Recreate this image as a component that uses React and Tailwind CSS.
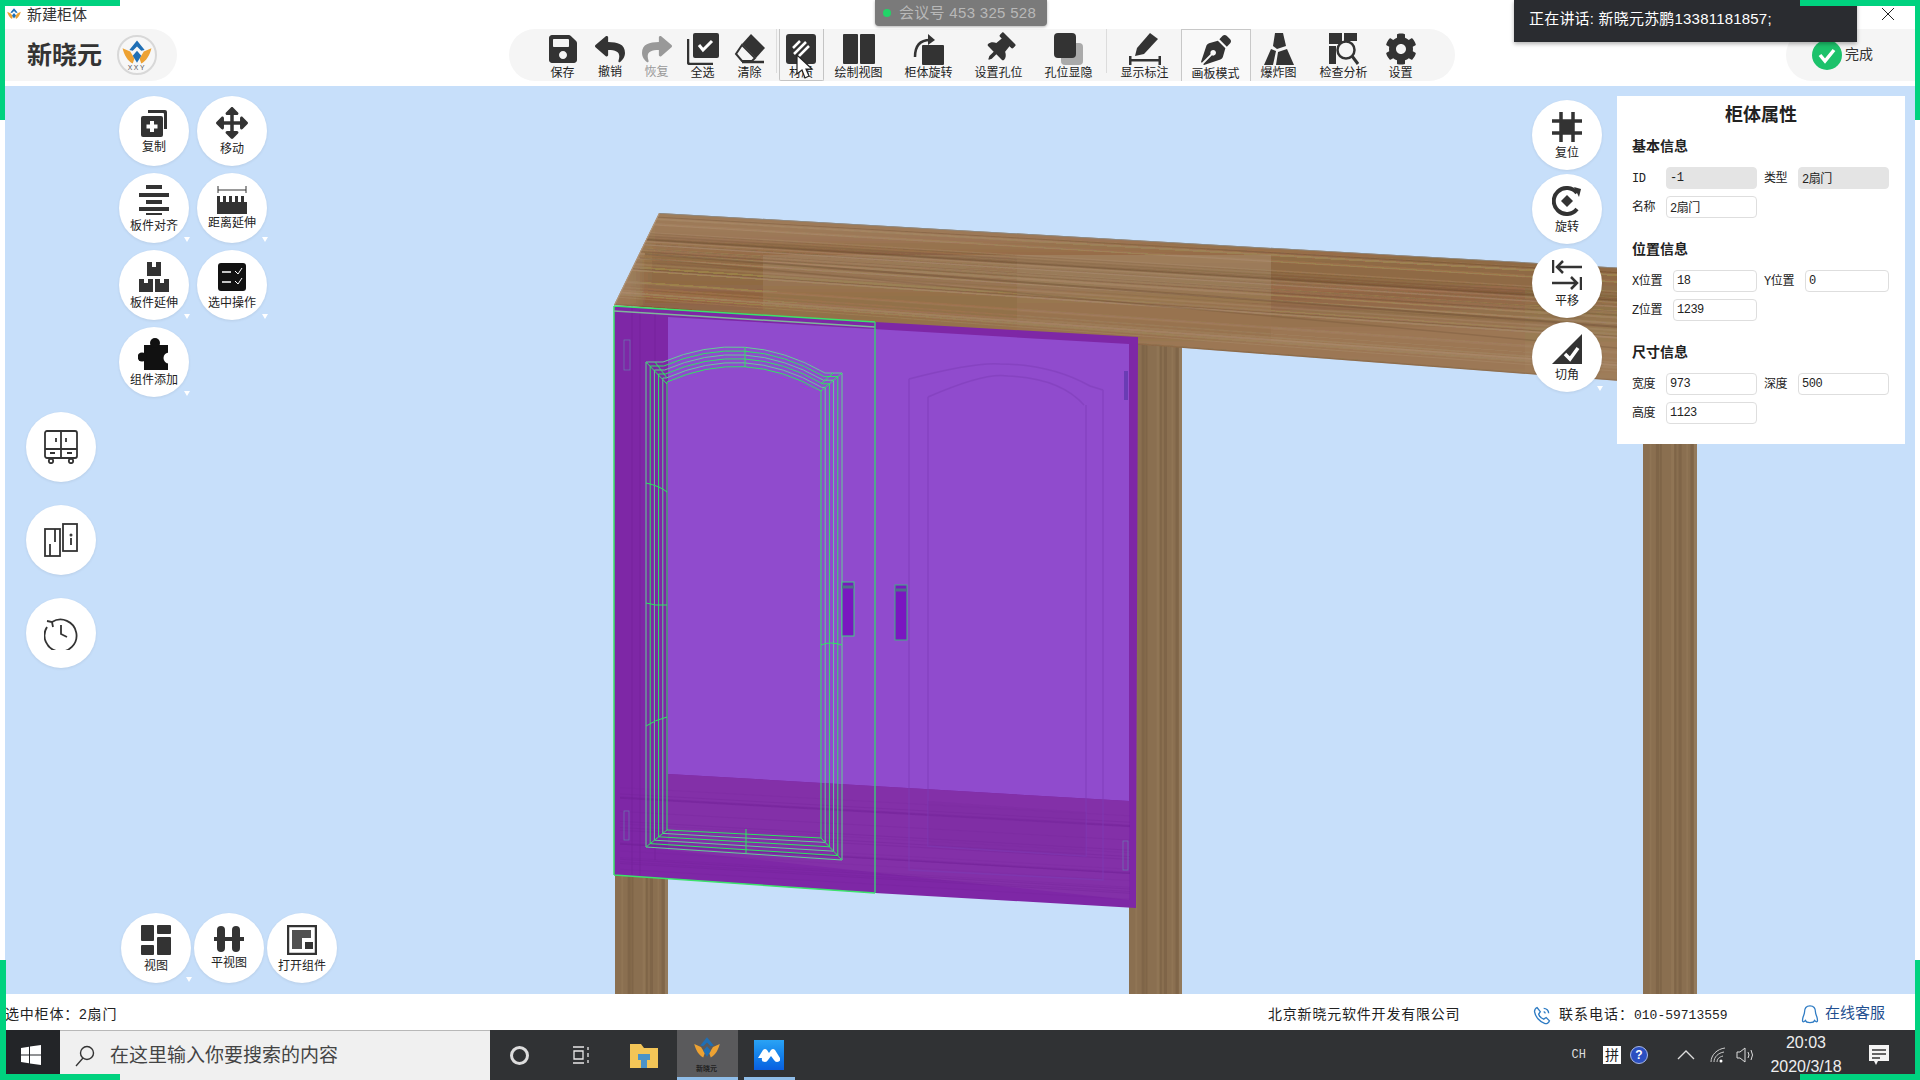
import { FaSave, FaReply, FaShare, FaCog, FaArrowsAlt, FaPenNib, FaThumbtack } from 'react-icons/fa';

// toolbar icons
const CheckAll = () => (
  <svg width="32" height="32" viewBox="0 0 32 32" fill="#333">
    <rect x="6" y="0" width="26" height="25" rx="2" />
    <path d="M12 12l4 5 9-9" stroke="#fff" strokeWidth="3" fill="none" />
    <path d="M1 6v23q0 2 2 2h23" stroke="#333" strokeWidth="2.5" fill="none" />
  </svg>
);
const Eraser = () => (
  <svg width="32" height="32" viewBox="0 0 32 32">
    <path d="M17 1l14 14-9 10-14-14z" fill="#333" />
    <path d="M8 12l13 13-3 3H8L2 21z" fill="none" stroke="#333" strokeWidth="2" />
    <path d="M8 29h22" stroke="#333" strokeWidth="2.500" />
  </svg>
);
const Hatch = () => (
  <svg width="32" height="32" viewBox="0 0 32 32">
    <rect x="1" y="1" width="30" height="30" rx="3" fill="#333" />
    <path d="M8 15L15 8M9 21L21 9M13 24L24 13" stroke="#fff" strokeWidth="2.500" />
  </svg>
);
const Columns = () => (
  <svg width="32" height="32" viewBox="0 0 32 32" fill="#333">
    <rect x="0" y="1" width="15" height="30" rx="1" />
    <rect x="17" y="1" width="15" height="30" rx="1" />
  </svg>
);
const RotateBox = () => (
  <svg width="34" height="32" viewBox="0 0 34 32">
    <rect x="10" y="12" width="22" height="20" rx="1" fill="#333" />
    <path d="M3 24C3 12 9 7 18 7" stroke="#333" strokeWidth="2.5" fill="none" />
    <path d="M16 1l7 6-7 5z" fill="#333" />
  </svg>
);
const Holes = () => (
  <svg width="32" height="32" viewBox="0 0 32 32">
    <rect x="8" y="10" width="22" height="22" rx="4" fill="#aaa" />
    <rect x="1" y="0" width="22" height="25" rx="4" fill="#333" />
  </svg>
);
const Annotate = () => (
  <svg width="34" height="32" viewBox="0 0 34 32" fill="#333">
    <path d="M9 15L22 0l8 6-14 15-9 2z" />
    <rect x="1" y="26" width="32" height="2.5" />
    <rect x="1" y="23" width="2.5" height="9" />
    <rect x="30.5" y="23" width="2.5" height="9" />
  </svg>
);
const Explode = () => (
  <svg width="32" height="32" viewBox="0 0 32 32" fill="#333">
    <path d="M12 0h8l3 13-9 3-4-3z" />
    <path d="M8 16l5 2-3 14H1z" />
    <path d="M15 19l9-3 7 16H13z" />
  </svg>
);
const Inspect = () => (
  <svg width="32" height="32" viewBox="0 0 32 32">
    <rect x="1" y="0" width="13" height="11" fill="#333" />
    <rect x="16" y="0" width="13" height="8" fill="#333" />
    <rect x="1" y="13" width="7" height="18" fill="#333" />
    <circle cx="18" cy="17" r="8.5" fill="#f5f5f5" stroke="#333" strokeWidth="2.5" />
    <path d="M24 23l6 8" stroke="#333" strokeWidth="3" />
  </svg>
);

// canvas button icons
const CopyPlus = () => (
  <svg width="28" height="28" viewBox="0 0 28 28" fill="#333">
    <path d="M8 1h17q2 0 2 2v17h-3V5q0-1-1-1H8z" />
    <rect x="1" y="7" width="22" height="21" rx="2" />
    <path d="M12 12v11M6.500 17.500h11" stroke="#fff" strokeWidth="4" />
  </svg>
);
const AlignLines = () => (
  <svg width="30" height="30" viewBox="0 0 30 30" fill="#333">
    <rect x="7" y="0" width="16" height="4" />
    <rect x="0" y="8" width="30" height="4" />
    <rect x="7" y="15" width="16" height="4" />
    <rect x="0" y="22" width="30" height="4" />
    <rect x="7" y="28" width="16" height="2" />
  </svg>
);
const Ruler = () => (
  <svg width="30" height="28" viewBox="0 0 30 28" fill="#333">
    <path d="M1 0v7M29 0v7M1 4h28" stroke="#333" strokeWidth="1" />
    <path d="M0 10h3v6h3v-6h3v6h3v-6h3v6h3v-6h3v6h3v-6h3v6h3v-6v18H0z" />
  </svg>
);
const Boxes = () => (
  <svg width="30" height="30" viewBox="0 0 30 30" fill="#333">
    <path d="M8 0h5v5h4V0h5v14H8zM0 17h5v4h4v-4h5v13H0zM16 17h5v4h4v-4h5v13H16z" />
  </svg>
);
const Checklist = () => (
  <svg width="28" height="28" viewBox="0 0 28 28">
    <rect x="0" y="0" width="28" height="28" rx="3" fill="#111" />
    <path d="M4 9h9M4 19h9" stroke="#fff" strokeWidth="1.500" />
    <path d="M17 8l3 3 4-6M17 18l3 3 4-6" stroke="#fff" strokeWidth="1" fill="none" />
  </svg>
);
const Puzzle = () => (
  <svg width="32" height="32" viewBox="0 0 32 32" fill="#111">
    <rect x="6" y="7" width="24" height="25" />
    <circle cx="17" cy="5" r="5" />
    <circle cx="4" cy="19" r="4.500" />
    <circle cx="31" cy="20" r="5.500" fill="#fff" />
  </svg>
);
const Hash = () => (
  <svg width="30" height="30" viewBox="0 0 30 30">
    <path d="M9 0v30M21 0v30M0 9h30M0 21h30" stroke="#333" strokeWidth="3.500" />
    <rect x="9" y="9" width="12" height="12" fill="#333" />
  </svg>
);
const RotateC = () => (
  <svg width="30" height="30" viewBox="0 0 30 30">
    <path d="M25 7A13 13 0 1 0 25 23" stroke="#333" strokeWidth="4" fill="none" />
    <path d="M15 9l6 6-6 6-6-6z" fill="#333" />
    <path d="M22 1l7 2-2 8z" fill="#333" />
  </svg>
);
const Shift = () => (
  <svg width="30" height="30" viewBox="0 0 30 30" fill="none" stroke="#333" strokeWidth="2.500">
    <path d="M1 0v13M5 7h25M11 1L5 7l6 6" />
    <path d="M29 17v13M0 23h25M19 17l6 6-6 6" />
  </svg>
);
const Chamfer = () => (
  <svg width="30" height="30" viewBox="0 0 30 30">
    <path d="M30 0v30H0z" fill="#333" />
    <path d="M13 20l5 5 8-11" stroke="#fff" strokeWidth="3.500" fill="none" />
  </svg>
);
const Layout = () => (
  <svg width="30" height="30" viewBox="0 0 30 30" fill="#333">
    <rect x="0" y="0" width="13" height="16" rx="1" />
    <rect x="0" y="20" width="13" height="10" rx="1" />
    <rect x="16" y="0" width="14" height="9" rx="1" />
    <rect x="16" y="12" width="14" height="18" rx="1" />
  </svg>
);
const Dumbbell = () => (
  <svg width="30" height="30" viewBox="0 0 30 30" fill="#333">
    <rect x="3" y="1" width="8" height="26" rx="4" />
    <rect x="18" y="1" width="8" height="26" rx="4" />
    <rect x="0" y="12" width="30" height="4" />
  </svg>
);
const OpenPart = () => (
  <svg width="30" height="30" viewBox="0 0 30 30">
    <rect x="1" y="1" width="28" height="28" fill="none" stroke="#333" strokeWidth="2.500" />
    <path d="M5 5h19v8h-9v11H5z" fill="#333" opacity="0.85" />
    <rect x="18" y="17" width="8" height="7" fill="#333" />
  </svg>
);
const Cabinet = () => (
  <svg width="34" height="34" viewBox="0 0 34 34" fill="none" stroke="#333" strokeWidth="1.800">
    <rect x="1" y="1" width="32" height="27" rx="2" />
    <path d="M1 19h32M17 1v27M12 8v4M22 8v4M6 23h5M23 23h5" />
    <circle cx="7" cy="31" r="2.200" />
    <circle cx="27" cy="31" r="2.200" />
  </svg>
);
const Doors = () => (
  <svg width="34" height="34" viewBox="0 0 34 34" fill="none" stroke="#333" strokeWidth="1.800">
    <rect x="1" y="6" width="15" height="27" />
    <rect x="19" y="1" width="14" height="27" />
    <path d="M11 6v13M6 33V21M27 15v7" />
    <circle cx="27" cy="12" r="0.600" />
  </svg>
);
const History = () => (
  <svg width="34" height="34" viewBox="0 0 34 34" fill="none" stroke="#333" strokeWidth="1.800">
    <path d="M8 6A16 16 0 1 1 3 11" />
    <path d="M3 5l5 1 1 5" />
    <path d="M17 9v9l6 3" />
  </svg>
);

// logo used in the header, the title bar and the taskbar
const Logo = ({ size = 30, text = true }) => (
  <svg width={size} height={size} viewBox="0 0 40 40">
    <path d="M20 3l9 11-4 1-5-5-5 5-4-1z" fill="#1f6fb5" />
    <path d="M3 12l9 4 5 8-2 6C9 27 5 20 3 12zM37 12l-9 4-5 8 2 6c6-3 10-10 12-18z" fill="#eda233" />
    <path d="M20 15l5 6-5 8-5-8z" fill="#1f6fb5" />
    {text && (
      <text x="20" y="38" textAnchor="middle" fontSize="8" fill="#555" letterSpacing="2" fontFamily="Liberation Sans">XXY</text>
    )}
  </svg>
);

const toolItems = [
  { label: '保存', w: 'w-[48px]', icon: <FaSave size={32} color="#333" /> },
  { label: '撤销', w: 'w-[47px]', icon: <FaReply size={30} color="#333" />, up: true },
  { label: '恢复', w: 'w-[46px]', icon: <FaShare size={30} color="#999" />, up: true, muted: true },
  { label: '全选', w: 'w-[46px]', icon: <CheckAll /> },
  { label: '清除', w: 'w-[48px]', icon: <Eraser /> },
  { divider: true },
  { label: '材质', w: 'w-[45px]', icon: <Hatch />, pressed: true },
  { label: '绘制视图', w: 'w-[70px]', icon: <Columns /> },
  { label: '柜体旋转', w: 'w-[70px]', icon: <RotateBox /> },
  { label: '设置孔位', w: 'w-[70px]', icon: <FaThumbtack size={30} color="#333" className="rotate-45" /> },
  { label: '孔位显隐', w: 'w-[70px]', icon: <Holes /> },
  { divider: true },
  { label: '显示标注', w: 'w-[72px]', icon: <Annotate /> },
  { label: '画板模式', w: 'w-[70px]', icon: <FaPenNib size={30} color="#333" />, active: true },
  { label: '爆炸图', w: 'w-[56px]', icon: <Explode /> },
  { label: '检查分析', w: 'w-[74px]', icon: <Inspect /> },
  { label: '设置', w: 'w-[40px]', icon: <FaCog size={32} color="#333" /> },
];

const ToolItem = ({ item }) => {
  if (item.divider) {
    return <div className="w-px h-[44px] bg-[#dcdcdc] mx-[2px] shrink-0" />;
  }
  return (
    <div
      className={`${item.w} h-[52px] shrink-0 flex flex-col items-center pt-[4px] ${item.pressed ? 'border-b border-x border-[#c4c4c4] rounded-b-[2px]' : ''} ${item.active ? 'border-t border-x border-[#c8c8c8] bg-[#f9f9f9]' : ''}`}
    >
      <div className="h-[32px] flex items-center justify-center">{item.icon}</div>
      <span className={`text-[12px] leading-[14px] whitespace-nowrap ${item.up ? 'mt-0' : 'mt-[1px]'} ${item.muted ? 'text-[#999]' : 'text-[#222]'}`}>
        {item.label}
      </span>
    </div>
  );
};

const CircleBtn = ({ icon, label, more, labelClass = '' }) => (
  <div className="relative w-[70px] h-[70px] rounded-full bg-white shadow-[0_1px_3px_rgba(0,0,0,0.08)] flex flex-col items-center justify-center">
    <div className="h-[32px] flex items-center justify-center">{icon}</div>
    {label && <span className={`text-[12px] leading-[14px] mt-[3px] text-[#222] whitespace-nowrap ${labelClass}`}>{label}</span>}
    {more && <span className="absolute right-[-1px] bottom-[1px] border-x-[3px] border-x-transparent border-t-[5px] border-t-white" />}
  </div>
);

const Field = ({ label, value, labelW = 'w-[34px]', disabled }) => (
  <div className="w-[125px] flex items-center">
    <span className={`${labelW} shrink-0 text-[12px] text-[#222] font-['Liberation_Mono','Noto_Sans_CJK_SC',monospace] tracking-[-0.4px] whitespace-nowrap translate-y-[1px]`}>{label}</span>
    <input
      readOnly
      value={value}
      className={`min-w-0 flex-1 h-[22px] pl-[3px] pr-[2px] rounded-[4px] border text-[12px] tracking-[-0.5px] text-[#222] font-['Liberation_Mono','Noto_Sans_CJK_SC',monospace] ${disabled ? 'bg-[#e4e4e4] border-[#e4e4e4]' : 'bg-white border-[#dedede]'}`}
    />
  </div>
);

const Section = ({ title, children }) => (
  <div className="mb-[21px]">
    <div className="h-[20px] mb-[11px] text-[14px] leading-[20px] font-bold text-[#222]">{title}</div>
    <div className="flex flex-wrap gap-x-[7px] gap-y-[7px]">{children}</div>
  </div>
);

// wood grain lines, fixed so that every render is the same
let seed = 11;
const rnd = () => {
  seed = (seed * 16807) % 2147483647;
  return (seed % 1000) / 1000;
};
const plankLines = Array.from({ length: 46 }, () => ({
  t: rnd(),
  dark: rnd() > 0.5,
  w: 0.6 + rnd() * 1.4,
  o: 0.12 + rnd() * 0.3,
}));
const bandLines = Array.from({ length: 22 }, () => ({ t: rnd(), o: 0.1 + rnd() * 0.2 }));

const Leg = ({ x, y, w, h }) => {
  const stripes = [0.12, 0.24, 0.31, 0.52, 0.58, 0.66, 0.8, 0.88];
  return (
    <g>
      <rect x={x} y={y} width={w} height={h} fill="#8a6f50" />
      {stripes.map((s, i) => (
        <rect key={i} x={x + s * w} y={y} width={i % 2 ? 3 : 2} height={h} fill={i % 3 ? '#7a6145' : '#937857'} opacity="0.7" />
      ))}
      <rect x={x + w - 3} y={y} width={3} height={h} fill="#9a8264" opacity="0.6" />
    </g>
  );
};

const lerp = (a, b, t) => a + (b - a) * t;
const wireSteps = [0, 0.2, 0.4, 0.6, 0.8, 1];
const wire = (i) => (i % 2 ? '#2ee860' : '#62cf95');

const Scene = () => (
  <svg className="absolute inset-0 w-full h-full" viewBox="5 86 1910 908">
    <defs>
      <clipPath id="plank">
        <path d="M659 213L1660 270V384L614 305z" />
      </clipPath>
    </defs>

    <Leg x={615} y={860} w={53} h={140} />
    <Leg x={1129} y={335} w={53} h={665} />
    <Leg x={1643} y={360} w={54} h={640} />

    {/* table top */}
    <path d="M659 213L1660 270V384L614 305z" fill="#9e7d5b" />
    <g clipPath="url(#plank)">
      {plankLines.map((l, i) => (
        <path
          key={i}
          d={`M${lerp(659, 614, l.t)} ${lerp(213, 305, l.t)}L1660 ${lerp(270, 384, l.t)}`}
          stroke={l.dark ? '#6d4f33' : '#b4967a'}
          strokeWidth={l.w}
          opacity={l.o}
        />
      ))}
      <path d="M645 254L1660 330" stroke="#6d4f33" strokeWidth="2" opacity="0.45" />
      <path d="M640 258L1660 352" stroke="#6d4f33" strokeWidth="1.500" opacity="0.3" />
      <path d="M659 213L1660 270" stroke="#8a8b88" strokeWidth="1.500" />
      <path d="M659 213L614 305" stroke="#b09478" strokeWidth="2" />
    </g>

    {/* cabinet body */}
    <path d="M614 306L875 322L1138 337L1136 908L875 893L614 875z" fill="#7e27a6" />
    <path d="M668 317L1129 344V801L668 774z" fill="#904bcd" />
    <path d="M668 774L1129 801V900L668 850z" fill="#8330a8" />
    {bandLines.map((l, i) => (
      <path key={i} d={`M620 ${lerp(780, 870, l.t)}L1130 ${lerp(808, 900, l.t)}`} stroke="#6f1f95" strokeWidth="1" opacity={l.o} />
    ))}
    <path d="M632 306V875M640 310V875M655 312V860" stroke="#6f1f95" strokeWidth="2" opacity="0.25" />

    {/* right door relief */}
    <g fill="none" stroke="#7d3db6" strokeWidth="1.500" opacity="0.5">
      <path d="M909 379Q975 362 1000 364Q1050 364 1090 386L1103 390" />
      <path d="M928 397Q985 372 1008 376Q1060 378 1084 405" />
      <path d="M909 379V870L1103 880V390" />
      <path d="M928 397V846L1086 856V405" />
    </g>
    <path d="M928 801V846L1086 856V812z" fill="#7a2aa1" opacity="0.35" />

    {/* selected door wireframe */}
    <g fill="none" strokeWidth="1">
      {wireSteps.map((t, i) => {
        const lx = lerp(646, 667, t);
        const ly = lerp(362, 382, t);
        const rx = lerp(842, 821, t);
        const ry = lerp(373, 391, t);
        const by = lerp(847, 830, t);
        const bry = lerp(860, 838, t);
        return (
          <g key={i} stroke={wire(i)}>
            <path d={`M${lx} ${ly}H${lerp(663, 667, t)}Q745 ${lerp(327, 347, t)} ${lerp(825, 821, t)} ${ry}H${rx}`} />
            <path d={`M${lx} ${ly}V${by}`} />
            <path d={`M${rx} ${ry}V${bry}`} />
            <path d={`M${lx} ${by}L${rx} ${bry}`} />
          </g>
        );
      })}
      <g stroke="#2ee860">
        <path d="M646 362L667 384M655 362L667 378M842 373L821 391M833 373L821 384M646 847L667 830M842 860L821 838" />
        <path d="M745 347V367M746 829V853" />
        <path d="M646 483Q660 486 667 492M646 603Q655 606 667 605M646 726Q655 720 667 717M821 645Q830 641 842 645" />
      </g>
      <path d="M614 306L875 322M614 875L875 893M614 306V875" stroke="#3be36a" strokeWidth="1.500" />
      <path d="M614 311L875 327" stroke="#7fb59b" strokeWidth="1.500" />
      <path d="M875 322V893" stroke="#3fc47a" strokeWidth="1.500" />
    </g>

    {/* handles and hinges */}
    <rect x="842" y="582" width="12" height="54" fill="#7a16c0" stroke="#3fd080" />
    <rect x="895" y="585" width="12" height="55" fill="#7a16c0" stroke="#3fb080" />
    <path d="M842 587H854M895 590H907" stroke="#4f6f8a" strokeWidth="3" />
    <rect x="624" y="340" width="6" height="30" fill="none" stroke="#6d6fb0" strokeWidth="0.800" />
    <rect x="624" y="811" width="5" height="29" fill="none" stroke="#6d6fb0" strokeWidth="0.800" />
    <rect x="1124" y="371" width="4" height="29" fill="#6a3cb4" />
    <rect x="1123" y="841" width="5" height="29" fill="none" stroke="#6d6fb0" strokeWidth="0.800" />
  </svg>
);

const App = () => {
  return (
    <div className="relative w-[1920px] h-[1080px] overflow-hidden flex flex-col bg-white font-['Liberation_Sans','Noto_Sans_CJK_SC',sans-serif]">
      {/* header */}
      <header className="h-[86px] shrink-0 bg-white">
        <div className="h-[29px] flex items-center gap-[5px] pl-[6px]">
          <Logo size={16} text={false} />
          <span className="text-[15px] leading-none text-[#333]">新建柜体</span>
        </div>
        <div className="h-[52px] flex justify-between pr-[5px]">
          <div className="w-[177px] rounded-r-[26px] bg-[#f5f5f5] flex items-center pl-[27px] gap-[15px]">
            <span className="text-[25px] font-bold leading-none text-[#333]">新晓元</span>
            <div className="w-[40px] h-[40px] rounded-full bg-[#f7f7f7] border-2 border-[#d8d8d8] flex items-center justify-center">
              <Logo size={34} />
            </div>
          </div>
          <div className="w-[946px] rounded-[26px] bg-[#f5f5f5] flex items-start pl-[30px]">
            {toolItems.map((item, i) => (
              <ToolItem key={i} item={item} />
            ))}
          </div>
          <div className="w-[129px] rounded-l-[26px] bg-[#f5f5f5] flex items-center pl-[26px] gap-[3px] pb-[1px]">
            <svg width="30" height="30" viewBox="0 0 30 30">
              <circle cx="15" cy="15" r="15" fill="#1cc26b" />
              <path d="M8 15l5 6 9-11" stroke="#fff" strokeWidth="3.500" fill="none" />
            </svg>
            <span className="text-[14px] text-[#333]">完成</span>
          </div>
        </div>
      </header>

      {/* 3d canvas */}
      <main className="relative flex-1 bg-[#c7dffa] border-x-[5px] border-white">
        <Scene />

        <div className="absolute left-[114px] top-[10px] grid grid-cols-2 gap-x-[8px] gap-y-[7px]">
          <CircleBtn icon={<CopyPlus />} label="复制" labelClass="-translate-y-[2px]" />
          <CircleBtn icon={<FaArrowsAlt size={32} color="#333" />} label="移动" />
          <CircleBtn icon={<AlignLines />} label="板件对齐" more />
          <CircleBtn icon={<Ruler />} label="距离延伸" labelClass="-translate-y-[3px]" more />
          <CircleBtn icon={<Boxes />} label="板件延伸" more />
          <CircleBtn icon={<Checklist />} label="选中操作" more />
          <CircleBtn icon={<Puzzle />} label="组件添加" more />
        </div>

        <div className="absolute left-[21px] top-[326px] flex flex-col gap-[23px]">
          <CircleBtn icon={<Cabinet />} />
          <CircleBtn icon={<Doors />} />
          <CircleBtn icon={<History />} />
        </div>

        <div className="absolute left-[116px] top-[827px] flex gap-[3px]">
          <CircleBtn icon={<Layout />} label="视图" more />
          <CircleBtn icon={<Dumbbell />} label="平视图" labelClass="-translate-y-[3px]" />
          <CircleBtn icon={<OpenPart />} label="打开组件" />
        </div>

        <div className="absolute left-[1527px] top-[14px] flex flex-col gap-[4px]">
          <CircleBtn icon={<Hash />} label="复位" />
          <CircleBtn icon={<RotateC />} label="旋转" />
          <CircleBtn icon={<Shift />} label="平移" />
          <CircleBtn icon={<Chamfer />} label="切角" more />
        </div>

        {/* properties panel */}
        <aside className="absolute left-[1612px] top-[10px] w-[288px] h-[348px] bg-white px-[15px]">
          <div className="h-[34px] mb-[6px] pt-[2px] text-center text-[18px] leading-[34px] font-bold text-[#222]">柜体属性</div>
          <Section title="基本信息">
            <Field label="ID" value="-1" disabled />
            <Field label="类型" value="2扇门" disabled />
            <Field label="名称" value="2扇门" />
          </Section>
          <Section title="位置信息">
            <Field label="X位置" value="18" labelW="w-[41px]" />
            <Field label="Y位置" value="0" labelW="w-[41px]" />
            <Field label="Z位置" value="1239" labelW="w-[41px]" />
          </Section>
          <Section title="尺寸信息">
            <Field label="宽度" value="973" />
            <Field label="深度" value="500" />
            <Field label="高度" value="1123" />
          </Section>
        </aside>
      </main>

      {/* status bar */}
      <footer className="h-[36px] shrink-0 bg-white flex items-center text-[14px] text-[#222] pl-[5px] pt-[5px]">
        <span className="w-[1263px] shrink-0 tracking-[0.8px]">选中柜体：2扇门</span>
        <span className="w-[264px] shrink-0 tracking-[0.8px]">北京新晓元软件开发有限公司</span>
        <svg width="20" height="20" viewBox="0 0 24 24" fill="none" stroke="#2f7cc4" strokeWidth="1.600" className="shrink-0">
          <path d="M6 3l4 5-2 3c1 3 3 5 6 6l3-2 4 4c-1 3-4 4-6 3C9 20 4 14 3 8c0-2 1-4 3-5z" />
          <path d="M14 4a6 6 0 0 1 6 6M14 8a3 3 0 0 1 2 2" />
        </svg>
        <span className="ml-[7px] w-[241px] shrink-0">
          <span className="tracking-[1px]">联系电话：</span>
          <span className="text-[13px] font-['Liberation_Mono',monospace]">010-59713559</span>
        </span>
        <svg width="20" height="22" viewBox="0 0 20 24" fill="none" stroke="#2f7cc4" strokeWidth="1.400" className="shrink-0">
          <path d="M10 2c4 0 6 3 6 7 0 3 3 6 2 10-1 1-2 0-3-1-1 3-9 3-10 0-1 1-2 2-3 1-1-4 2-7 2-10 0-4 2-7 6-7z" />
        </svg>
        <span className="ml-[5px] text-[15px] text-[#1f4f90] -translate-y-[1px]">在线客服</span>
      </footer>

      {/* windows taskbar */}
      <div className="h-[50px] shrink-0 bg-[#303234] flex items-stretch">
        <div className="w-[60px] shrink-0 pl-[1px] bg-[#232528] flex items-center justify-center">
          <svg width="20" height="20" viewBox="0 0 20 20" fill="#fff">
            <path d="M0 3l8-1.200V9.500H0zM9 1.600L20 0v9.500H9zM0 10.500h8v7.700L0 17zM9 10.500h11V20l-11-1.600z" />
          </svg>
        </div>
        <div className="w-[430px] shrink-0 bg-[#f0f0f0] border-t border-[#b8b8b8] flex items-center pl-[15px] gap-[15px]">
          <svg width="20" height="22" viewBox="0 0 20 22" fill="none" stroke="#333" strokeWidth="1.400">
            <circle cx="12" cy="8" r="6.500" />
            <path d="M8 13L1 21" />
          </svg>
          <span className="text-[19px] leading-none text-[#444]">在这里输入你要搜索的内容</span>
        </div>
        <div className="w-[60px] shrink-0 flex items-center justify-center pr-[2px]">
          <div className="w-[19px] h-[19px] rounded-full border-[3px] border-[#ddd]" />
        </div>
        <div className="w-[60px] shrink-0 flex items-center justify-center">
          <svg width="20" height="20" viewBox="0 0 20 20" fill="none" stroke="#e8e8e8" strokeWidth="1.300">
            <path d="M3 2h11M3 18h11M4 6h9v8H4zM18 2v3M18 8v4M18 15v3" />
          </svg>
        </div>
        <div className="w-[66px] shrink-0 flex items-center justify-center pl-[2px]">
          <svg width="30" height="30" viewBox="0 0 30 30">
            <path d="M1 4h11l3 4h14v20H1z" fill="#f3c557" />
            <path d="M9 14h12v6h-3v8h-6v-8H9z" fill="#4b93c8" />
          </svg>
        </div>
        <div className="w-[61px] shrink-0 ml-[1px] pr-[2px] bg-[#5a5a5c] border-b-[3px] border-[#8fbde8] flex flex-col items-center justify-center">
          <Logo size={30} text={false} />
          <span className="text-[7px] leading-none text-[#222] font-bold">新晓元</span>
        </div>
        <div className="w-[51px] shrink-0 ml-[6px] pr-[2px] border-b-[3px] border-[#8fbde8] flex items-center justify-center pt-[3px]">
          <div className="w-[30px] h-[30px] bg-gradient-to-b from-[#2aa3f5] to-[#0b5fe0] flex items-center justify-center">
            <svg width="22" height="14" viewBox="0 0 22 14" fill="#fff">
              <path d="M0 10L5 2q2-2 4 0l2 3 2-3q2-2 4 0l5 8q1 4-3 4-2 0-3-2l-3-4-3 4q-1 2-3 2-4 0-3-4z" />
            </svg>
          </div>
        </div>

        {/* tray */}
        <div className="flex-1 flex items-center justify-end text-white">
          <span className="text-[12px] text-[#ddd] font-['Liberation_Mono',monospace] mr-[9px] -translate-x-[8px]">CH</span>
          <span className="w-[18px] h-[18px] bg-white text-[#222] text-[14px] leading-[18px] text-center mr-[9px]">拼</span>
          <span className="w-[18px] h-[18px] rounded-full bg-[#2b4fc0] border border-[#a8b8e8] text-white text-[12px] font-bold leading-[16px] text-center mr-[29px]">?</span>
          <svg width="18" height="12" viewBox="0 0 18 12" fill="none" stroke="#ddd" strokeWidth="1.300" className="mr-[14px]">
            <path d="M1 10l8-8 8 8" />
          </svg>
          <svg width="18" height="18" viewBox="0 0 18 18" fill="none" stroke="#ccc" strokeWidth="1" className="mr-[9px]">
            <path d="M2 16C2 9 8 3 16 2M5 16c0-5 4-9 10-10M8 16c0-3 2-5 6-6" />
            <circle cx="12" cy="15" r="1.500" fill="#fff" stroke="none" />
          </svg>
          <svg width="20" height="18" viewBox="0 0 20 18" fill="none" stroke="#ddd" strokeWidth="1" className="mr-[10px]">
            <path d="M1 6h3l5-4v14l-5-4H1zM12 6q2 3 0 6M15 4q3 5 0 10" />
          </svg>
          <div className="w-[80px] shrink-0 text-center text-[16px] leading-[24px] text-[#eee]">
            <div>20:03</div>
            <div>2020/3/18</div>
          </div>
          <svg width="22" height="22" viewBox="0 0 22 22" className="ml-[22px] mr-[30px]">
            <path d="M1 1h20v16H10l-2 4-2-4H1z" fill="#f4f4f4" />
            <path d="M4 6h14M4 10h14M4 14h8" stroke="#333" strokeWidth="1.300" />
          </svg>
        </div>
      </div>

      {/* meeting overlays */}
      <div className="absolute left-[875px] top-0 w-[172px] h-[26px] rounded-b-[4px] bg-[#7a7a7a] shadow-[0_1px_3px_rgba(0,0,0,0.3)] flex items-center pl-[8px] gap-[8px]">
        <span className="w-[8px] h-[8px] rounded-full bg-[#22d468]" />
        <span className="text-[15px] tracking-[0.3px] text-[#b8b8b8] whitespace-nowrap">会议号 453 325 528</span>
      </div>
      <div className="absolute left-[1514px] top-0 w-[343px] h-[42px] bg-[#2a2c30] shadow-[0_2px_4px_rgba(0,0,0,0.3)] flex items-center pl-[15px] pb-[4px]">
        <span className="text-[15px] tracking-[0.2px] text-white whitespace-nowrap">正在讲话: 新晓元苏鹏13381181857;</span>
      </div>
      <svg width="14" height="14" viewBox="0 0 14 14" stroke="#222" strokeWidth="1" className="absolute left-[1881px] top-[7px]">
        <path d="M1 1l12 12M13 1L1 13" />
      </svg>

      {/* mouse cursor */}
      <svg width="18" height="26" viewBox="0 0 18 26" className="absolute left-[796px] top-[54px]">
        <path d="M1 1v19l5-4 3 8 4-2-3-7h6z" fill="#fff" stroke="#222" strokeWidth="1.200" />
      </svg>

      {/* green share frame corners */}
      <div className="absolute left-0 top-0 w-[120px] h-[6px] bg-[#00d27f]" />
      <div className="absolute left-0 top-0 w-[5px] h-[120px] bg-[#00d27f]" />
      <div className="absolute right-0 top-0 w-[120px] h-[6px] bg-[#00d27f]" />
      <div className="absolute right-0 top-0 w-[5px] h-[120px] bg-[#00d27f]" />
      <div className="absolute left-0 bottom-0 w-[120px] h-[6px] bg-[#00d27f]" />
      <div className="absolute left-0 bottom-0 w-[6px] h-[120px] bg-[#00d27f]" />
      <div className="absolute right-0 bottom-0 w-[120px] h-[6px] bg-[#00d27f]" />
      <div className="absolute right-0 bottom-0 w-[5px] h-[120px] bg-[#00d27f]" />
    </div>
  );
};

export default App;
